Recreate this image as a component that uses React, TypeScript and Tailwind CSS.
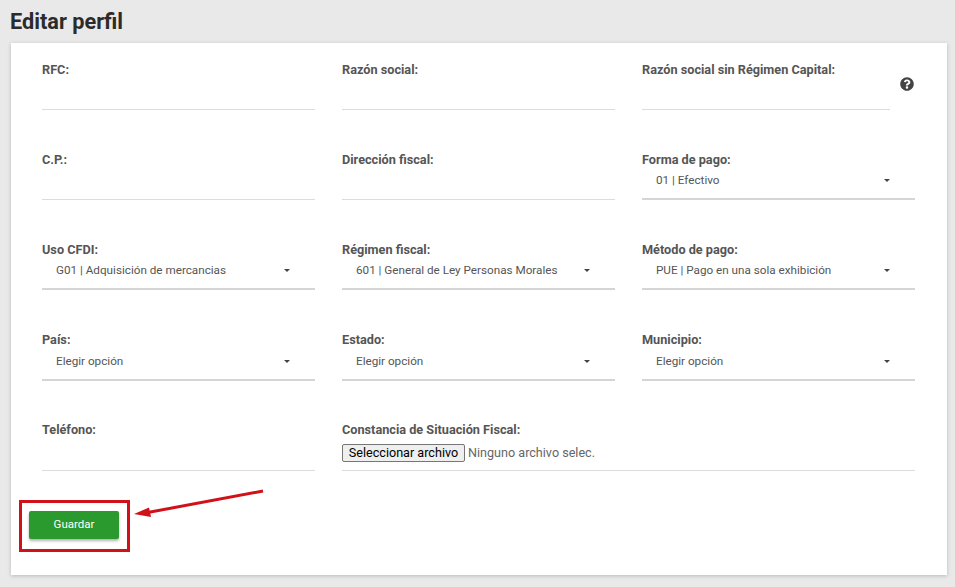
import { FaQuestionCircle } from 'react-icons/fa'

function Label({ children }: { children: React.ReactNode }) {
  return <label className="block h-[19px] text-[12.7px] font-bold leading-[19px] text-[#555]">{children}</label>
}

function TextField({ label, tall }: { label: string; tall?: boolean }) {
  return (
    <div>
      <Label>{label}</Label>
      <input type="text" className={tall ? 'block h-[32px] w-full border-b border-[#dcdcdc] bg-transparent outline-none' : 'block h-[31px] w-full border-b border-[#dcdcdc] bg-transparent outline-none'} />
    </div>
  )
}

function SelectField({ label, value, tall }: { label: string; value: string; tall?: boolean }) {
  return (
    <div>
      <Label>{label}</Label>
      <div className={tall ? 'flex h-[32px] items-start justify-between border-b-2 border-[#d5d5d5] pl-[14px] pr-[25px] pt-[3px]' : 'flex h-[31px] items-start justify-between border-b-2 border-[#d5d5d5] pl-[14px] pr-[25px] pt-[2px]'}>
        <span className="text-[11.7px] leading-[19px] text-[#555]">{value}</span>
        <svg width="6" height="3" viewBox="0 0 6 3" className="mt-[8px]">
          <path d="M0 0h6L3 3z" fill="#444" />
        </svg>
      </div>
    </div>
  )
}

export default function App() {
  return (
    <div className="h-[587px] overflow-hidden bg-[#e9e9e9] font-['Roboto',sans-serif]">
      <h1 className="h-[43px] pl-[10px] pt-[8px] text-[21.7px] font-bold leading-[28px] text-[#2b2b2b]">Editar perfil</h1>

      <div className="relative ml-[11px] h-[532px] w-[936px] bg-white pl-[31px] pr-[32px] pt-[17px] shadow-[0_1px_4px_rgba(0,0,0,0.2)]">
        <div className="grid auto-rows-[90px] grid-cols-3 gap-x-[27px]">
          <TextField label="RFC:" />
          <TextField label="Razón social:" />
          <div className="flex items-start">
            <div className="w-[248px]">
              <TextField label="Razón social sin Régimen Capital:" />
            </div>
            <FaQuestionCircle className="ml-[10px] mt-[17px] h-[14px] w-[14px] text-[#444]" />
          </div>

          <TextField label="C.P.:" />
          <TextField label="Dirección fiscal:" />
          <SelectField label="Forma de pago:" value="01 | Efectivo" />

          <SelectField label="Uso CFDI:" value="G01 | Adquisición de mercancias" />
          <SelectField label="Régimen fiscal:" value="601 | General de Ley Personas Morales" />
          <SelectField label="Método de pago:" value="PUE | Pago en una sola exhibición" />

          <SelectField tall label="País:" value="Elegir opción" />
          <SelectField tall label="Estado:" value="Elegir opción" />
          <SelectField tall label="Municipio:" value="Elegir opción" />

          <TextField tall label="Teléfono:" />
          <div className="col-span-2">
            <Label>Constancia de Situación Fiscal:</Label>
            <div className="flex h-[32px] items-start border-b border-[#dcdcdc] pt-[5px]">
              <button className="h-[18px] w-[123px] whitespace-nowrap rounded-[2px] border border-[#767676] bg-[#efefef] text-[12.6px] leading-[16px] text-black">
                Seleccionar archivo
              </button>
              <span className="ml-[3px] text-[12.6px] leading-[18px] text-[#666]">Ninguno archivo selec.</span>
            </div>
          </div>
        </div>

        <button className="absolute left-[18px] top-[468px] h-[28px] w-[90px] rounded-[2px] bg-[#2a9a2f] text-[11.5px] text-white shadow-[0_2px_3px_rgba(0,0,0,0.3)]">
          Guardar
        </button>

        {/* red markup over the screenshot */}
        <div className="absolute left-[8px] top-[457px] h-[52px] w-[111px] border-[3px] border-[#d1111a]" />
        <svg className="absolute left-[120px] top-[445px]" width="136" height="32" viewBox="0 0 136 32">
          <path d="M132 3 L14 25" stroke="#d1111a" strokeWidth="3" fill="none" />
          <path d="M3 26 L18 19.5 L20 29 z" fill="#d1111a" />
        </svg>
      </div>
    </div>
  )
}
